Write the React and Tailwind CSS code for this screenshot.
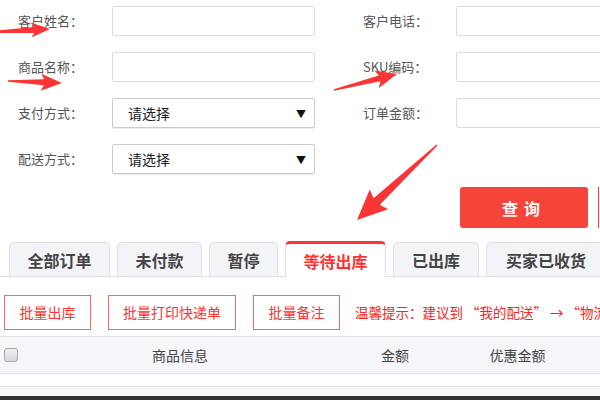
import React from 'react'

const FONT = { fontFamily: '"Noto Sans CJK SC", "Noto Sans", sans-serif' }

// tapered arrow polygon: thin tail, wide head
const arrowPoints = (tail, tip, headLen, headW, w0, w1) => {
  const dx = tip[0] - tail[0]
  const dy = tip[1] - tail[1]
  const len = Math.hypot(dx, dy)
  const ux = dx / len
  const uy = dy / len
  const nx = -uy
  const ny = ux
  const bx = tip[0] - ux * headLen
  const by = tip[1] - uy * headLen
  const p = (x, y) => `${x.toFixed(1)},${y.toFixed(1)}`
  return [
    p(tail[0] + nx * w0 / 2, tail[1] + ny * w0 / 2),
    p(bx + ux * 3 + nx * w1 / 2, by + uy * 3 + ny * w1 / 2),
    p(bx + nx * headW / 2, by + ny * headW / 2),
    p(tip[0], tip[1]),
    p(bx - nx * headW / 2, by - ny * headW / 2),
    p(bx + ux * 3 - nx * w1 / 2, by + uy * 3 - ny * w1 / 2),
    p(tail[0] - nx * w0 / 2, tail[1] - ny * w0 / 2),
  ].join(' ')
}

const arrows = [
  { tail: [-6, 32], tip: [50, 29], hl: 19, hw: 15, w0: 2, w1: 6 },
  { tail: [8, 81], tip: [62, 83], hl: 21, hw: 17, w0: 1.5, w1: 6 },
  { tail: [334, 90], tip: [397, 74], hl: 21, hw: 18, w0: 1.5, w1: 6 },
  { tail: [437, 145], tip: [357, 220], hl: 30, hw: 27, w0: 1.5, w1: 9 },
]

const Field = ({ label, select }) => (
  <div className="flex items-center h-[30px]">
    <div className="w-[112px] shrink-0 pl-[18px] text-[13px] text-[#555]">{label}：</div>
    {select ? (
      <div className="w-[203px] shrink-0 h-[30px] border border-[#ccc] rounded-[2px] bg-white flex items-center justify-between pl-[15px] pr-[8px] shadow-[0_1px_1px_rgba(0,0,0,0.08)]">
        <span className="text-[14px] text-[#222]">请选择</span>
        <span className="text-[10px] text-[#111]">▼</span>
      </div>
    ) : (
      <div className="w-[203px] shrink-0 h-[30px] border border-[#ddd] rounded-[2px] bg-white" />
    )}
  </div>
)

const RightField = ({ label }) => (
  <div className="flex items-center h-[30px]">
    <div className="w-[93px] shrink-0 text-[13px] text-[#555]">{label}：</div>
    <div className="w-[160px] shrink-0 h-[30px] border border-[#ddd] rounded-[2px] bg-white" />
  </div>
)

const tabs = [
  { name: '全部订单', w: 'w-[101px]' },
  { name: '未付款', w: 'w-[85px]' },
  { name: '暂停', w: 'w-[69px]' },
  { name: '等待出库', w: 'w-[101px]', active: true },
  { name: '已出库', w: 'w-[86px]' },
  { name: '买家已收货', w: 'w-[120px]' },
]

export default function App() {
  return (
    <div className="relative w-[600px] h-[400px] overflow-hidden bg-white" style={FONT}>
      {/* Search form */}
      <div className="flex pt-[6px]">
        <div className="flex flex-col gap-[16px] shrink-0">
          <Field label="客户姓名" />
          <Field label="商品名称" />
          <Field label="支付方式" select />
          <Field label="配送方式" select />
        </div>
        <div className="flex flex-col gap-[16px] ml-[48px] shrink-0">
          <RightField label="客户电话" />
          <RightField label="SKU编码" />
          <RightField label="订单金额" />
        </div>
      </div>

      {/* Query button */}
      <div className="flex mt-[13px] pl-[460px] h-[41px]">
        <div className="w-[128px] shrink-0 h-[41px] bg-[#f5453a] rounded-[3px] flex items-center justify-center text-white text-[16px] font-bold tracking-[6px]">
          查询
        </div>
        <div className="ml-[10px] w-[10px] shrink-0 h-[41px] border-l border-[#f5453a]" />
      </div>

      {/* Tabs */}
      <div className="flex items-end gap-[7px] pl-[9px] mt-[13px] h-[36px] border-b border-[#dde1e6]">
        {tabs.map((t) =>
          t.active ? (
            <div
              key={t.name}
              className={`${t.w} shrink-0 h-[36px] -mb-px bg-white border-x border-[#dde1e6] border-t-[3px] border-t-[#f33] rounded-t-[5px] flex items-center justify-center text-[16px] font-bold text-[#f33]`}
            >
              {t.name}
            </div>
          ) : (
            <div
              key={t.name}
              className={`${t.w} shrink-0 h-[34px] bg-[#f3f4f7] border border-b-0 border-[#dde1e6] rounded-t-[5px] flex items-center justify-center text-[16px] font-bold text-[#444]`}
            >
              {t.name}
            </div>
          )
        )}
      </div>

      {/* Batch actions */}
      <div className="flex items-center mt-[18px] pl-[4px] h-[35px]">
        <div className="w-[87px] shrink-0 h-[35px] border border-[#f66] flex items-center justify-center text-[14px] text-[#f33]">批量出库</div>
        <div className="ml-[17px] w-[128px] shrink-0 h-[35px] border border-[#f66] flex items-center justify-center text-[14px] text-[#f33]">批量打印快递单</div>
        <div className="ml-[17px] w-[87px] shrink-0 h-[35px] border border-[#f66] flex items-center justify-center text-[14px] text-[#f33]">批量备注</div>
        <div className="ml-[15px] shrink-0 text-[13.5px] text-[#f22] whitespace-nowrap">温馨提示：建议到 “我的配送” → “物流设置”</div>
      </div>

      {/* Table header */}
      <div className="mt-[6px] h-[38px] bg-[#f5f6f9] border-y border-[#e3e5e8] flex items-center">
        <div className="w-[30px] shrink-0 pl-[4px]">
          <div className="w-[14px] h-[14px] rounded-[3px] border border-[#aaa] bg-gradient-to-b from-[#f0f0f0] to-[#d8d8d8]" />
        </div>
        <div className="w-[300px] shrink-0 text-center text-[14px] text-[#444]">商品信息</div>
        <div className="w-[130px] shrink-0 text-center text-[14px] text-[#444]">金额</div>
        <div className="w-[115px] shrink-0 text-center text-[14px] text-[#444]">优惠金额</div>
      </div>
      <div className="h-[13px] bg-white border-b border-[#e3e5e8]" />
      <div className="h-[9px] bg-[#f6f6f6]" />
      <div className="h-[10px] bg-[#333]" />

      {/* Annotation arrows */}
      <svg className="absolute inset-0 pointer-events-none" width="600" height="400">
        {arrows.map((a, i) => (
          <polygon key={i} points={arrowPoints(a.tail, a.tip, a.hl, a.hw, a.w0, a.w1)} fill="#fb3535" />
        ))}
      </svg>
    </div>
  )
}
